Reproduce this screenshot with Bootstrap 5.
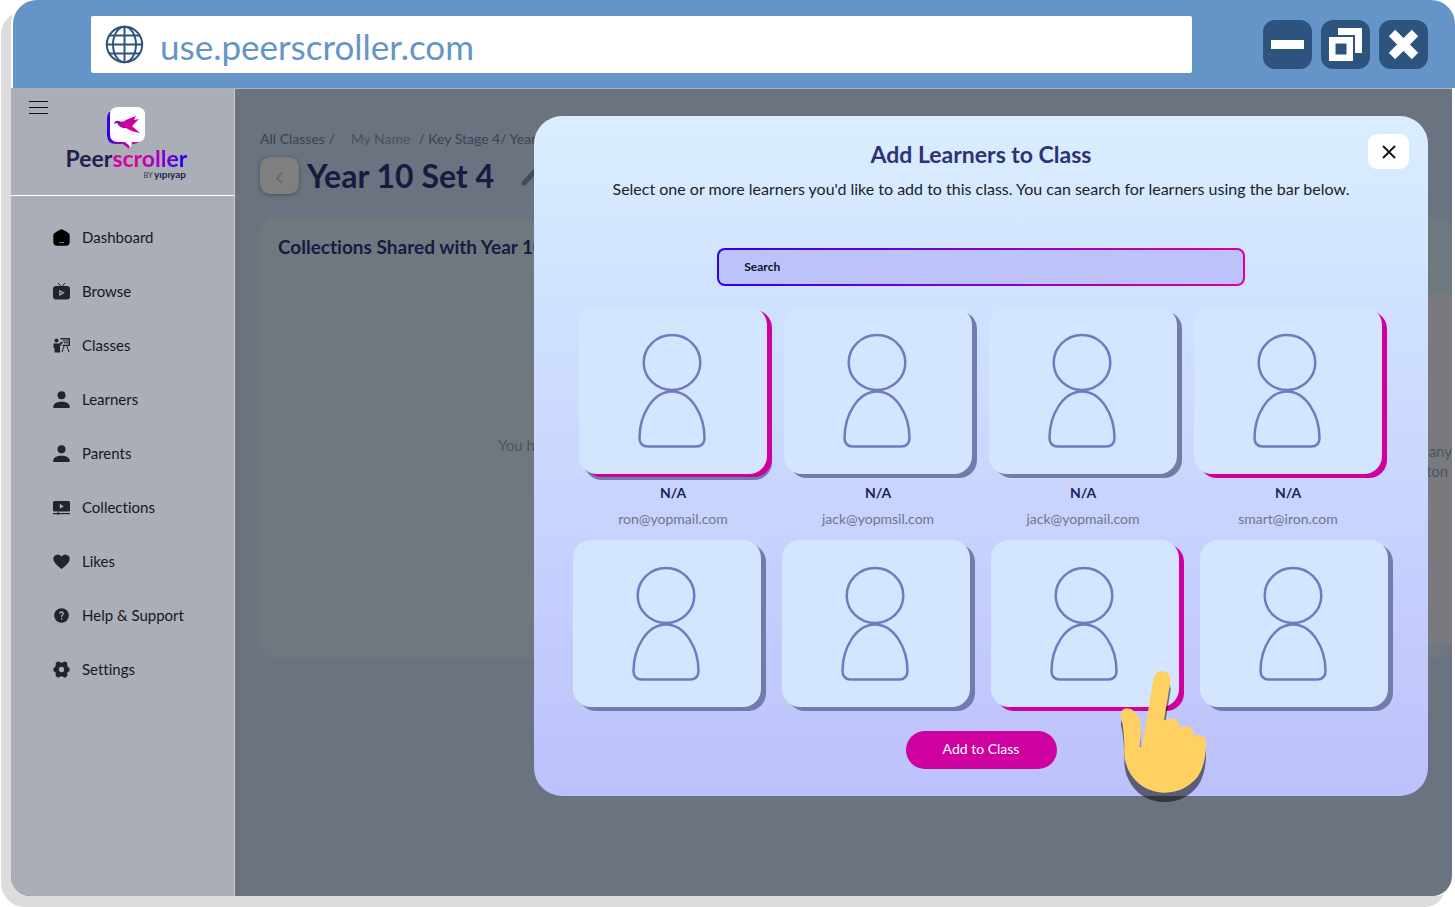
<!DOCTYPE html>
<html lang="en">
<head>
<meta charset="utf-8">
<meta name="viewport" content="width=device-width, initial-scale=1">
<title>Peerscroller</title>
<link href="https://cdn.jsdelivr.net/npm/bootstrap@5.3.0/dist/css/bootstrap.min.css" rel="stylesheet">
<style>
:root { --magenta:#cf00a0; --navy:#181a40; --slate:#6b7280; --font:Lato,"Open Sans",sans-serif; }
body { font-family:var(--font); font-size:15px; line-height:20px; background:#fff; font-variant-ligatures:none; }
button, input { font-family:inherit; }
.window { min-height:calc(100vh - 11px); margin:0 0 11px 11px; border-radius:24px 24px 20px 24px; box-shadow:-10px 11px 0 #dcdcdc; }
.titlebar { height:88px; margin-left:2px; padding:0 27px 0 78px; background:#6594c9; border-radius:24px 24px 0 0; }
.address { height:57px; margin-right:71px; padding-left:14px; background:#fff; border-radius:2px; }
.address input { border:0; outline:0; background:none; color:#6594c9; font-size:35px; line-height:40px; padding:4px 0 0; }
.winbtns { gap:9px; }
.winbtn { width:49px; height:49px; border:0; border-radius:12px; background:#2c547f; }
.screen { margin-right:3px; border-top:1px solid #a9b4c3; border-radius:0 0 20px 20px; overflow:hidden; background:var(--slate); }
.side { width:224px; background:#aaaeb6; border-right:1px solid #c9cdd1; }
.brand { height:107px; padding:17px 0 0 8px; border-bottom:1px solid #fff; }
.menu-btn { left:18px; top:9px; }
.brand-name { font-size:23px; line-height:20px; margin-top:-4px; font-weight:700; color:#251d4e; }
.brand-name span { background:linear-gradient(90deg,#d800a0 35%,#a800c0 60%,#2a00f5 95%); -webkit-background-clip:text; background-clip:text; color:transparent; }
.brand-by { font-size:7px; line-height:12px; color:#333; }
.brand-by b { font-size:10px; color:#251d4e; }
.side .nav { padding-top:14px; }
.side .nav-link { height:54px; padding:0 0 0 42px; color:#16181b; gap:12px; }
.stage { min-width:0; }
.behind { padding:40px 0 0 25px; color:#3d4352; white-space:nowrap; }
.crumbs { font-size:14px; }
.behind a { color:#3d4352; text-decoration:none; }
.behind a.owner { color:#4b5160; }
.back { width:39px; height:37px; border:0; border-radius:10px; background:#7f7f7f; box-shadow:0 1px 4px #0005; }
.behind h1 { font-size:32px; line-height:37px; font-weight:700; color:var(--navy); }
.panels { margin-top:24px; }
.panel { height:440px; border-radius:16px; background:#70787f; padding:17px 18px; flex:1 1 0; min-width:0; overflow:hidden; }
.panel h2 { font-size:19px; line-height:24px; font-weight:700; color:var(--navy); }
.hint { padding:176px 0 0 220px; color:#4f545f; }
.inner { height:350px; margin:35px -18px 0; padding-top:147px; background:#787a7f; color:#4f545f; }
.veil { padding:27px 24px 100px 299px; }
.dialog { height:680px; border-radius:28px; background:linear-gradient(#daeeff,#d0e1ff 28%,#c7d2fe 62%,#bcc1fb); padding-top:25px; }
.dialog h2 { font-size:23px; line-height:26px; font-weight:700; color:#2f3273; }
.dialog .intro { font-size:16px; line-height:20px; color:#1b2129; margin-top:12px; }
.close-x { right:19px; top:18px; width:41px; height:35px; border:0; border-radius:9px; background:#fff; }
.close-x svg, .tile svg { display:block; margin:0 auto; }
.search { display:block; width:59%; height:38px; margin:49px auto 0; padding:0 25px 2px; font-size:12px; font-weight:700; border:2px solid transparent; border-radius:8px; background:linear-gradient(#bcc3fb,#bcc3fb) padding-box,linear-gradient(90deg,#3300e6,#8a00c4 55%,#d800a0) border-box; }
.search::placeholder { color:#101225; opacity:1; }
.people { gap:17px; padding:0 46px 0 45px; margin-top:21px; }
.people-wide { gap:21px; padding:0 40px 0 39px; margin-top:11px; }
.person { min-width:0; flex:1 1 0; text-align:center; }
.tile { display:block; height:167px; width:100%; padding:0 2px 0 0; border:0; border-radius:18px; background:#d4e6ff; box-shadow:5px 4px 0 #717caa; }
.tile[aria-pressed=true] { box-shadow:5px 4px 0 var(--magenta); }
.tile.stacked[aria-pressed=true] { box-shadow:5px 3px 0 var(--magenta),5px 6px 0 #717caa; }
.person strong { display:block; font-size:14px; line-height:20px; margin-top:9px; color:#20235a; }
.person span { display:block; font-size:14px; line-height:20px; margin-top:6px; color:#70758b; }
.add { width:151px; height:38px; margin-top:24px; padding:0 0 2px; border:0; border-radius:19px; background:var(--magenta); color:#fff; font-size:14px; }
.hand { right:218px; bottom:-9px; pointer-events:none; }
</style>
</head>
<body>
<svg class="d-none">
  <symbol id="avatar" viewBox="0 0 70 116"><g fill="none" stroke="#7179bf" stroke-width="2.500"><ellipse cx="35" cy="29.500" rx="28.300" ry="27.500"/><path d="M35 58.500C16 58.500 2.500 82 2.500 105Q2.500 113.500 11 113.500H59Q67.500 113.500 67.500 105C67.500 82 54 58.500 35 58.500Z"/></g></symbol>
  <symbol id="user" viewBox="0 0 17 17"><circle cx="8.500" cy="4.200" r="4"/><path d="M.3 17v-1.500C.3 12.500 4 10.800 8.500 10.800s8.200 1.700 8.200 4.700V17z"/></symbol>
</svg>
<div class="window d-flex flex-column">
  <header class="titlebar d-flex align-items-center">
    <div class="address d-flex align-items-center flex-grow-1 gap-3">
      <svg width="39" height="39" viewBox="0 0 39 39" fill="none" stroke="#2c547f" stroke-width="2"><circle cx="19.500" cy="19.500" r="17.700"/><ellipse cx="19.500" cy="19.500" rx="11.500" ry="17.700"/><path d="M19.500 2v35M2 19.500h35M4 10.500h31M4 28.500h31"/></svg>
      <input class="flex-grow-1" type="text" aria-label="Address" value="use.peerscroller.com">
    </div>
    <div class="winbtns d-flex">
      <button class="winbtn p-0" aria-label="Minimise"><svg width="49" height="49"><path fill="#fff" d="M8 20h33v9H8z"/></svg></button>
      <button class="winbtn p-0" aria-label="Restore"><svg width="49" height="49" fill="#fff"><path d="M17 8h24v25h-7V15H17z"/><path fill="#2c547f" d="M6 15.500h27.500V41H6z"/><path fill-rule="evenodd" d="M8 17h24v24H8zM14.500 23.500v11h11v-11z"/></svg></button>
      <button class="winbtn p-0" aria-label="Close window"><svg width="49" height="49"><path stroke="#fff" stroke-width="9" d="M13 13l23 23M36 13L13 36"/></svg></button>
    </div>
  </header>
  <div class="screen d-flex flex-grow-1">
    <aside class="side flex-shrink-0">
      <div class="brand position-relative d-flex flex-column align-items-center">
        <button class="menu-btn btn p-0 border-0 position-absolute lh-1" aria-label="Menu"><svg width="19" height="15"><path stroke="#111" d="M0 1.500h19M0 7.500h19M0 13.500h19"/></svg></button>
        <svg class="flex-shrink-0" width="42" height="46" viewBox="0 0 42 46">
          <defs><linearGradient id="g"><stop stop-color="#2a00f5"/><stop offset=".6" stop-color="#d800a0"/></linearGradient><linearGradient id="b"><stop stop-color="#5a20a8"/><stop offset=".4" stop-color="#cf00a0"/></linearGradient></defs>
          <path fill="url(#g)" d="M3 6Q1 9 1 14V29Q1 38 10 38H17L23 43V38Q31 39 35 34L38 9Z"/>
          <path fill="#fff" d="M12 1H31Q39 1 39 9V28Q39 36 31 36H26L25 41L19 36H12Q4 36 4 28V9Q4 1 12 1Z"/>
          <path fill="url(#b)" d="M8 18Q9 14 13 15Q17 17 20 14Q24 12 30 10L28 14L33 13L26 20L34 27Q26 26 20 22Q14 23 11 17Z"/>
        </svg>
        <div class="brand-name">Peer<span>scroller</span></div>
        <div class="brand-by align-self-end pe-5">BY <b>yıpıyap</b></div>
      </div>
      <nav class="nav flex-column" aria-label="Main">
        <a class="nav-link d-flex align-items-center" href="#"><svg width="17" height="17" viewBox="0 0 17 17"><path d="M8.500.3Q9.500.3 16 4.500Q16.700 5 16.700 7V13Q16.700 16.700 13 16.700H4Q.3 16.700.3 13V7Q.3 5 1 4.500Q7.500.3 8.500.3Z"/><path stroke="#777" d="M6 13.500h5"/></svg>Dashboard</a>
        <a class="nav-link d-flex align-items-center" href="#"><svg width="17" height="17" viewBox="0 0 17 17" fill="#222427"><path fill="none" stroke="#222427" d="M5 0l3.500 4L12 0"/><rect y="3" width="17" height="13.500" rx="3"/><path fill="none" stroke="#aaaeb6" stroke-width="1.200" d="M6.800 7.700v4.200l3.800-2.100z"/></svg>Browse</a>
        <a class="nav-link d-flex align-items-center" href="#"><svg width="17" height="17" viewBox="0 0 17 17" fill="#222427"><circle cx="3.500" cy="3.500" r="2"/><path d="M.5 6.500H6l3-2 1 1-3 3.500v6.500H1.500V11H.5z"/><path fill-rule="evenodd" d="M7 1h10v8H9l1-1.300h5.500V2.500H8z"/><path stroke="#222427" d="M10 4h5M11 5.800h4M11.500 8l-2.500 7M13.500 8l2.500 7"/></svg>Classes</a>
        <a class="nav-link d-flex align-items-center" href="#"><svg width="17" height="17" fill="#222427"><use href="#user"/></svg>Learners</a>
        <a class="nav-link d-flex align-items-center" href="#"><svg width="17" height="17" fill="#222427"><use href="#user"/></svg>Parents</a>
        <a class="nav-link d-flex align-items-center" href="#"><svg width="17" height="17" viewBox="0 0 17 17" fill="#222427"><rect y="2" width="17" height="10.500" rx="1.500"/><path fill="#aaaeb6" d="M6.800 4.800v5l4-2.500z"/><path stroke="#222427" stroke-width="1.200" d="M0 14.600h17"/><circle cx="5" cy="14.500" r="1.200"/></svg>Collections</a>
        <a class="nav-link d-flex align-items-center" href="#"><svg width="17" height="17" viewBox="0 0 17 17" fill="#222427"><path d="M8.500 16Q6 14.500 2 10Q-1 6 1.300 3Q5 -.3 8.500 3.500Q12-.3 15.700 3Q18 6 15 10Q11 14.500 8.500 16Z"/></svg>Likes</a>
        <a class="nav-link d-flex align-items-center" href="#"><svg width="17" height="17" viewBox="0 0 17 17"><circle cx="8.500" cy="8.500" r="7.300" fill="#222427"/><path fill="none" stroke="#aaaeb6" stroke-width="1.300" d="M6.700 6.800Q6.700 5 8.500 5t1.800 1.600Q10.300 7.500 8.700 8.700V10M8.700 11v1.400"/></svg>Help &amp; Support</a>
        <a class="nav-link d-flex align-items-center" href="#"><svg width="17" height="17" viewBox="0 0 17 17"><circle cx="8.500" cy="8.500" r="4.800" fill="none" stroke="#222427" stroke-width="4.200"/><path stroke="#222427" stroke-width="5" stroke-linecap="round" d="M5.500 3.400L5.200 3.200M11.500 3.400l.3-.2M2.800 8.500h.2M14 8.500h.2M5.500 13.600l-.3.200M11.500 13.600l.3.200"/></svg>Settings</a>
      </nav>
    </aside>
    <main class="stage position-relative flex-grow-1 overflow-hidden">
      <div class="behind">
        <div class="crumbs d-flex"><a href="#">All Classes /</a><a class="owner ms-3" href="#">My Name</a><a class="ms-2" href="#">/ Key Stage 4/ Year 10 Set 4</a></div>
        <div class="d-flex align-items-center mt-2">
          <button class="back p-0" aria-label="Back"><svg width="12" height="12"><path fill="none" stroke="#62646c" stroke-width="1.500" d="M8 1L3 6l5 5"/></svg></button>
          <h1 class="mb-0 ms-2">Year 10 Set 4</h1>
          <svg class="ms-4" width="24" height="24"><path stroke="#454b5b" stroke-width="5" stroke-linecap="round" d="M6 19L20 4"/></svg>
        </div>
        <div class="panels d-flex gap-4">
          <section class="panel"><h2 class="mb-0">Collections Shared with Year 10 Set 4</h2><div class="hint">You haven't shared any</div></section>
          <section class="panel"><h2 class="mb-0">Learners</h2><div class="inner text-end">You haven't added any<br>using the button&nbsp;</div></section>
        </div>
      </div>
      <div class="veil position-absolute top-0 start-0 w-100">
        <div class="dialog position-relative text-center" role="dialog" aria-labelledby="dlg-title">
          <button class="close-x position-absolute p-0" aria-label="Close"><svg width="14" height="14"><path stroke="#111" stroke-width="1.800" d="M1 1l12 12M13 1L1 13"/></svg></button>
          <h2 class="mb-0" id="dlg-title">Add Learners to Class</h2>
          <p class="intro mb-0">Select one or more learners you'd like to add to this class. You can search for learners using the bar below.</p>
          <input class="search" type="search" placeholder="Search" aria-label="Search">
          <div class="people d-flex">
            <div class="person"><button class="tile stacked" aria-pressed="true" aria-label="Select ron"><svg width="70" height="116"><use href="#avatar"/></svg></button><strong>N/A</strong><span>ron@yopmail.com</span></div>
            <div class="person"><button class="tile" aria-pressed="false" aria-label="Select jack"><svg width="70" height="116"><use href="#avatar"/></svg></button><strong>N/A</strong><span>jack@yopmsil.com</span></div>
            <div class="person"><button class="tile" aria-pressed="false" aria-label="Select jack"><svg width="70" height="116"><use href="#avatar"/></svg></button><strong>N/A</strong><span>jack@yopmail.com</span></div>
            <div class="person"><button class="tile" aria-pressed="true" aria-label="Select smart"><svg width="70" height="116"><use href="#avatar"/></svg></button><strong>N/A</strong><span>smart@iron.com</span></div>
          </div>
          <div class="people people-wide d-flex">
            <div class="person"><button class="tile" aria-pressed="false" aria-label="Select learner 5"><svg width="70" height="116"><use href="#avatar"/></svg></button></div>
            <div class="person"><button class="tile" aria-pressed="false" aria-label="Select learner 6"><svg width="70" height="116"><use href="#avatar"/></svg></button></div>
            <div class="person"><button class="tile" aria-pressed="true" aria-label="Select learner 7"><svg width="70" height="116"><use href="#avatar"/></svg></button></div>
            <div class="person"><button class="tile" aria-pressed="false" aria-label="Select learner 8"><svg width="70" height="116"><use href="#avatar"/></svg></button></div>
          </div>
          <button class="add">Add to Class</button>
          <svg class="hand position-absolute" width="92" height="137" viewBox="415 415 276 411">
            <defs><path id="h" d="M487 652L522 445Q528 423 550 424Q573 428 573 452L553 572Q572 563 585 568Q598 574 600 594Q615 585 630 592Q645 602 643 621Q655 611 668 618Q680 626 679 648Q678 705 655 740Q615 790 553 789Q490 787 455 737Q434 705 434 670Q435 610 424 558Q422 537 443 536Q470 538 481 575Q486 610 480 652Z"/></defs>
            <use href="#h" y="28" fill="#000" opacity=".52"/><use href="#h" fill="#ffd162"/>
          </svg>
        </div>
      </div>
    </main>
  </div>
</div>
<script src="https://cdn.jsdelivr.net/npm/bootstrap@5.3.0/dist/js/bootstrap.bundle.min.js"></script>
</body>
</html>
